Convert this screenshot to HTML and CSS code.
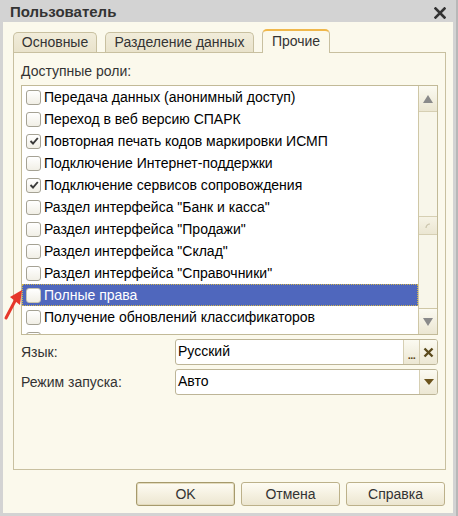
FILE: index.html
```html
<!DOCTYPE html>
<html lang="ru">
<head>
<meta charset="utf-8">
<title>Пользователь</title>
<link rel="stylesheet" href="styles.css">
</head>
<body>
<div class="window">
  <div class="titlebar">
    <span class="title">Пользователь</span>
    <svg class="close" width="12" height="12" viewBox="0 0 12 12"><path d="M1.5 1.5 L10.5 10.5 M10.5 1.5 L1.5 10.5" stroke="#333" stroke-width="2.6" stroke-linecap="square"/></svg>
  </div>
  <div class="client">
    <div class="tabs">
      <div class="tab t1">Основные</div>
      <div class="tab t2">Разделение данных</div>
      <div class="tab t3 active">Прочие</div>
    </div>
    <div class="panel">
      <div class="label">Доступные роли:</div>
      <div class="list">
        <div class="rows">
          <div class="row"><span class="cb"></span>Передача данных (анонимный доступ)</div>
          <div class="row"><span class="cb"></span>Переход в веб версию СПАРК</div>
          <div class="row"><span class="cb"><svg width="12" height="12" viewBox="0 0 12 12"><path d="M2.5 6 L5 8.5 L9.8 3" fill="none" stroke="#3a3a3a" stroke-width="1.9"/></svg></span>Повторная печать кодов маркировки ИСМП</div>
          <div class="row"><span class="cb"></span>Подключение Интернет-поддержки</div>
          <div class="row"><span class="cb"><svg width="12" height="12" viewBox="0 0 12 12"><path d="M2.5 6 L5 8.5 L9.8 3" fill="none" stroke="#3a3a3a" stroke-width="1.9"/></svg></span>Подключение сервисов сопровождения</div>
          <div class="row"><span class="cb"></span>Раздел интерфейса "Банк и касса"</div>
          <div class="row"><span class="cb"></span>Раздел интерфейса "Продажи"</div>
          <div class="row"><span class="cb"></span>Раздел интерфейса "Склад"</div>
          <div class="row"><span class="cb"></span>Раздел интерфейса "Справочники"</div>
          <div class="row selected"><span class="cb"></span>Полные права</div>
          <div class="row"><span class="cb"></span>Получение обновлений классификаторов</div>
          <div class="row"><span class="cb"></span></div>
        </div>
        <div class="scrollbar">
          <div class="sbtn"><svg width="10" height="8" viewBox="0 0 10 8"><path d="M5 0 L10 8 L0 8 Z" fill="#8a8a8a"/></svg></div>
          <div class="track">
            <div class="thumb"><svg width="6" height="6" viewBox="0 0 6 6"><path d="M1 5 A4 4 0 0 1 5 1" fill="none" stroke="#c9c3aa" stroke-width="1.2"/></svg></div>
          </div>
          <div class="sbtn"><svg width="10" height="8" viewBox="0 0 10 8"><path d="M0 0 L10 0 L5 8 Z" fill="#8a8a8a"/></svg></div>
        </div>
      </div>
      <div class="form">
        <div class="frow">
          <span class="flabel">Язык:</span>
          <div class="field">
            <span class="fvalue">Русский</span>
            <span class="fbtn dots">...</span>
            <span class="fbtn clear"><svg width="11" height="11" viewBox="0 0 11 11"><path d="M1.5 1.5 L9.5 9.5 M9.5 1.5 L1.5 9.5" stroke="#5b4a1c" stroke-width="2.4"/></svg></span>
          </div>
        </div>
        <div class="frow">
          <span class="flabel">Режим запуска:</span>
          <div class="field">
            <span class="fvalue">Авто</span>
            <span class="fbtn drop"><svg width="10" height="6" viewBox="0 0 10 6"><path d="M0 0 L10 0 L5 6 Z" fill="#6b531c"/></svg></span>
          </div>
        </div>
      </div>
    </div>
    <div class="buttons">
      <div class="btn default">OK</div>
      <div class="btn">Отмена</div>
      <div class="btn">Справка</div>
    </div>
  </div>
  <svg class="arrow" width="26" height="36" viewBox="0 0 26 36"><path d="M3 33 L13 14" stroke="#e6372b" stroke-width="3" stroke-linecap="round"/><path d="M19 5 L7 12 L17 20 Z" fill="#e6372b"/></svg>
</div>
</body>
</html>
```

FILE: styles.css
```css
* { box-sizing: border-box; }
html, body { margin: 0; padding: 0; }
body {
  width: 458px;
  height: 516px;
  overflow: hidden;
  background: #d3d3d3;
  font-family: "Liberation Sans", Arial, sans-serif;
  font-size: 14px;
  color: #1a1a1a;
}
.window {
  position: relative;
  width: 458px;
  height: 516px;
  display: flex;
  flex-direction: column;
  border-right: 2px solid #b8b8b8;
}
.titlebar {
  height: 22px;
  flex: none;
  display: flex;
  align-items: center;
  justify-content: space-between;
  padding: 1px 10px 0 10px;
}
.title {
  font-size: 15px;
  font-weight: bold;
  color: #333;
}
.close { margin-top: 2px; }
.client {
  flex: 1;
  background: #fbf9ec;
  margin: 0 3px 3px 3px;
  padding-top: 7px;
  display: flex;
  flex-direction: column;
}
.tabs {
  display: flex;
  align-items: flex-end;
  gap: 8px;
  height: 23px;
  padding-left: 10px;
  position: relative;
  z-index: 1;
}
.tab {
  height: 20px;
  border: 1px solid #c8c0a0;
  border-bottom: none;
  border-radius: 5px 5px 0 0;
  background: linear-gradient(#f1ecda, #e9e3cb);
  color: #333;
  line-height: 19px;
  text-align: center;
}
.t1 { width: 84px; }
.t2 { width: 149px; }
.t3 { width: 68px; }
.tab.active {
  height: 24px;
  margin-bottom: -1px;
  background: #fbf9ec;
  border-top: 2px solid #f0b84c;
  line-height: 21px;
}
.panel {
  margin-left: 10px;
  width: 433px;
  height: 418px;
  border: 1px solid #c8c0a0;
  padding: 9px 0 0 7px;
}
.label {
  line-height: 18px;
  color: #333;
  margin-bottom: 5px;
}
.list {
  width: 417px;
  height: 250px;
  border: 1px solid #c2ba98;
  background: #fff;
  display: flex;
  overflow: hidden;
}
.rows {
  flex: 1;
  overflow: hidden;
}
.row {
  height: 22px;
  display: flex;
  align-items: center;
  padding-left: 4px;
  color: #000;
  white-space: nowrap;
}
.cb {
  width: 15px;
  height: 15px;
  flex: none;
  margin-right: 3px;
  border: 1px solid #a5a294;
  border-radius: 3px;
  background: linear-gradient(#fff, #f1efe6);
  display: flex;
  align-items: center;
  justify-content: center;
}
.row.selected {
  background: #4f67bd;
  color: #fff;
  outline: 1px dotted #d2b64a;
  outline-offset: -1px;
}
.row.selected .cb { border-color: #c9c5b0; }
.scrollbar {
  width: 19px;
  flex: none;
  border-left: 1px solid #cfc7a6;
  background: #f8f6ea;
  display: flex;
  flex-direction: column;
}
.sbtn {
  height: 26px;
  flex: none;
  background: linear-gradient(#fbfaf1, #ebe6d2);
  border-bottom: 1px solid #d6cfb3;
  display: flex;
  align-items: center;
  justify-content: center;
}
.sbtn:last-child { border-bottom: none; border-top: 1px solid #cfc7a6; }
.track {
  flex: 1;
  padding-top: 104px;
}
.thumb {
  height: 19px;
  background: linear-gradient(#f6f3e5, #ebe6d2);
  border-top: 1px solid #d6cfb3;
  border-bottom: 1px solid #d6cfb3;
  display: flex;
  align-items: center;
  justify-content: center;
}
.form {
  display: flex;
  flex-direction: column;
  gap: 4px;
  margin-top: 4px;
}
.frow {
  display: flex;
  align-items: center;
  height: 26px;
}
.flabel {
  width: 154px;
  color: #333;
}
.field {
  width: 263px;
  height: 26px;
  border: 1px solid #bdb597;
  border-radius: 3px;
  background: #fff;
  display: flex;
  align-items: stretch;
  overflow: hidden;
}
.fvalue {
  flex: 1;
  padding-left: 2px;
  line-height: 23px;
  color: #000;
}
.fbtn {
  width: 18px;
  flex: none;
  background: linear-gradient(#fbfaf1, #ece7d3);
  border-left: 1px solid #d6cfb3;
  display: flex;
  align-items: center;
  justify-content: center;
}
.fbtn.dots {
  width: 16px;
  align-items: flex-end;
  color: #5b4a1c;
  font-weight: bold;
  font-size: 11px;
  line-height: 14px;
  letter-spacing: -0.5px;
  padding-bottom: 2px;
}
.buttons {
  display: flex;
  justify-content: flex-end;
  gap: 6px;
  margin-top: 12px;
  padding-right: 8px;
}
.btn {
  width: 99px;
  height: 24px;
  border: 1px solid #bcb18a;
  border-radius: 3px;
  background: linear-gradient(#fefcf3, #ece6d0);
  color: #333;
  text-align: center;
  line-height: 22px;
}
.btn.default { border-color: #a69a6c; box-shadow: inset 0 0 0 1px #e3dbbd; }
.arrow {
  position: absolute;
  left: 3px;
  top: 285px;
}
```
